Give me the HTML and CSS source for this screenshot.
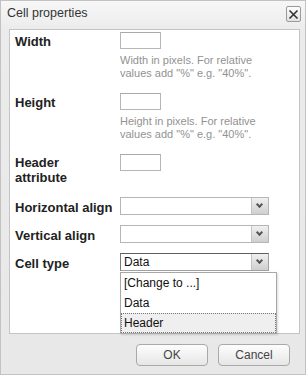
FILE: index.html
```html
<!DOCTYPE html>
<html lang="en">

<head>
    <meta charset="UTF-8">
    <meta name="viewport" content="width=device-width, initial-scale=1.0">
    <title>Cell properties</title>
    <link rel="stylesheet" href="styles.css">
</head>

<body>
    <div class="dialog">
        <div class="dlg_title">
            <span>Cell properties</span>
            <span class="close_btn">
                <svg width="11" height="11" viewBox="0 0 11 11">
                    <path d="M1.5 1.5 L9.5 9.5 M9.5 1.5 L1.5 9.5" stroke="#333" stroke-width="1.6" />
                </svg>
            </span>
        </div>

        <div class="panel">
            <div class="row">
                <div class="lbl">Width</div>
                <div class="field">
                    <div class="txt_in"></div>
                    <div class="help">Width in pixels. For relative<br>values add "%" e.g. "40%".</div>
                </div>
            </div>
            <div class="row r2">
                <div class="lbl">Height</div>
                <div class="field">
                    <div class="txt_in"></div>
                    <div class="help">Height in pixels. For relative<br>values add "%" e.g. "40%".</div>
                </div>
            </div>
            <div class="row r3">
                <div class="lbl two">Header<br>attribute</div>
                <div class="field">
                    <div class="txt_in"></div>
                </div>
            </div>
            <div class="row r4">
                <div class="lbl sl">Horizontal align</div>
                <div class="field">
                    <div class="sel"><span class="sel_val"></span><span class="arrow"></span></div>
                </div>
            </div>
            <div class="row r5">
                <div class="lbl sl">Vertical align</div>
                <div class="field">
                    <div class="sel"><span class="sel_val"></span><span class="arrow"></span></div>
                </div>
            </div>
            <div class="row r5">
                <div class="lbl sl">Cell type</div>
                <div class="field drop_wrap">
                    <div class="sel focus"><span class="sel_val">Data</span><span class="arrow"></span></div>
                    <ul class="drop_list">
                        <li>[Change to ...]</li>
                        <li>Data</li>
                        <li class="hl">Header</li>
                    </ul>
                </div>
            </div>
        </div>

        <div class="footer">
            <button class="btn">OK</button>
            <button class="btn">Cancel</button>
        </div>
    </div>
</body>

</html>
```

FILE: styles.css
```css
body {
    margin: 0;
    font-family: "Liberation Sans", Arial, sans-serif;
    background-color: #fff;
}

.dialog {
    width: 306px;
    height: 375px;
    box-sizing: border-box;
    border: 1px solid #c2c2c2;
    background: linear-gradient(#f7f7f7, #ebebeb 30px, #e8e8e8);
}

.dlg_title {
    height: 28px;
    display: flex;
    justify-content: space-between;
    align-items: flex-start;
    padding: 5px 4px 0 6px;
    box-sizing: border-box;
    font-size: 12.5px;
    color: #333;
}

.close_btn {
    width: 13px;
    height: 14px;
    border: 1px solid #9a9a9a;
    border-radius: 2px;
    background: linear-gradient(#fdfdfd, #e2e2e2);
    display: flex;
    align-items: center;
    justify-content: center;
}

.panel {
    margin: 0 5px 0 8px;
    height: 305px;
    box-sizing: border-box;
    border: 1px solid #c4c4c4;
    background-color: #fff;
    padding: 2px 0 0 5px;
}

.row {
    display: flex;
    align-items: flex-start;
}

.r2,
.r3 {
    margin-top: 13px;
}

.r4 {
    margin-top: 12px;
}

.r5 {
    margin-top: 10px;
}

.lbl {
    width: 105px;
    flex: none;
    font-size: 13px;
    font-weight: bold;
    color: #222;
    line-height: 15px;
    padding-top: 2px;
}

.lbl.two {
    padding-top: 1px;
}

.lbl.sl {
    padding-top: 3px;
}

.txt_in {
    width: 41px;
    height: 17px;
    box-sizing: border-box;
    border: 1px solid #b6b6b6;
    border-top-color: #a9a9a9;
    background-color: #fff;
}

.help {
    margin-top: 5px;
    font-size: 11px;
    line-height: 13px;
    color: #929292;
}

.sel {
    width: 149px;
    height: 18px;
    box-sizing: border-box;
    border: 1px solid #b6b6b6;
    display: flex;
    background-color: #fff;
}

.sel.focus {
    border-color: #5e5e5e #a0a0a0 #a0a0a0 #7a7a7a;
}

.sel_val {
    flex: 1;
    font-size: 12px;
    line-height: 16px;
    padding-left: 3px;
    color: #111;
}

.arrow {
    width: 16px;
    border-left: 1px solid #c4c4c4;
    background: linear-gradient(#f0f0f0, #cfcfcf);
    position: relative;
}

.arrow::after {
    content: "";
    position: absolute;
    left: 5px;
    top: 4px;
    width: 3px;
    height: 3px;
    border-right: 2px solid #555;
    border-bottom: 2px solid #555;
    transform: rotate(45deg);
}

.drop_wrap {
    position: relative;
}

.drop_list {
    position: absolute;
    top: 19px;
    left: 0;
    width: 157px;
    margin: 0;
    padding: 0;
    list-style: none;
    box-sizing: border-box;
    border: 1px solid #a8a8a8;
    background-color: #fff;
    box-shadow: 1px 1px 2px rgba(0, 0, 0, 0.15);
}

.drop_list li {
    height: 20px;
    line-height: 20px;
    font-size: 12px;
    padding-left: 3px;
    color: #111;
    box-sizing: border-box;
}

.drop_list li.hl {
    background-color: #efefef;
    border: 1px dotted #777;
    line-height: 18px;
    padding-left: 2px;
}

.footer {
    display: flex;
    justify-content: flex-end;
    gap: 10px;
    padding: 10px 15px 0 0;
}

.btn {
    width: 72px;
    height: 22px;
    border: 1px solid #a9a9a9;
    border-radius: 4px;
    background: linear-gradient(#fdfdfd, #e6e6e6);
    font-family: "Liberation Sans", Arial, sans-serif;
    font-size: 12px;
    color: #444;
    padding: 0;
}
```
